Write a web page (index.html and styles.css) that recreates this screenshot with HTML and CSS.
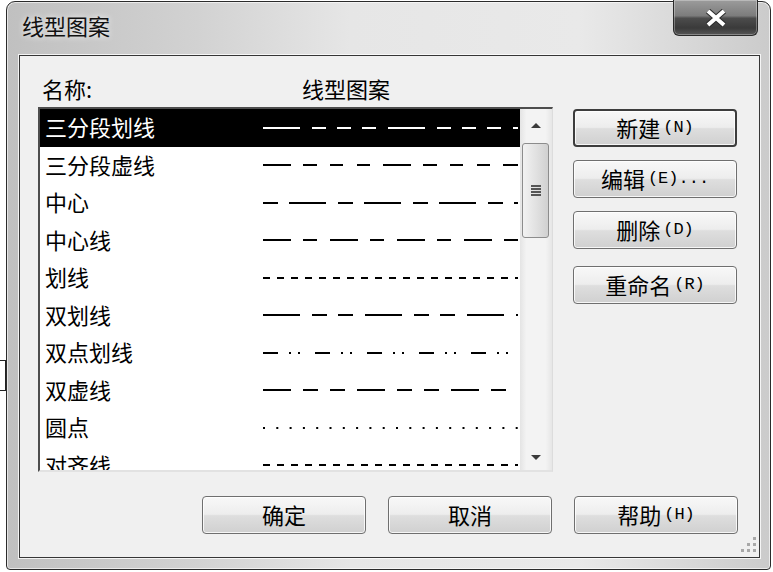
FILE: index.html
```html
<!DOCTYPE html>
<html>
<head>
    <meta charset="utf-8">
    <title>线型图案</title>
    <link rel="stylesheet" href="styles.css">
</head>
<body>
    <div class="behind"></div>
    <div class="window">
        <div class="titlebar">
            <span class="title">线型图案</span>
            <div class="close">
                <svg width="22" height="18" viewBox="0 0 22 18">
                    <path d="M3 2 L19 16 M19 2 L3 16" stroke="#2a2a2a" stroke-width="6"/>
                    <path d="M3 2 L19 16 M19 2 L3 16" stroke="#fff" stroke-width="4"/>
                </svg>
            </div>
        </div>
        <div class="client">
            <div class="main">
                <div class="left">
                    <div class="head"><span class="c1">名称:</span><span>线型图案</span></div>
                    <div class="listbox">
                        <ul class="list">
                            <li class="row sel"><span class="name">三分段划线</span><svg class="pat" width="255" height="4"><line x1="0" y1="2" x2="255" y2="2" stroke-dasharray="37 12 14 11 14 11 14 12"/></svg></li>
                            <li class="row"><span class="name">三分段虚线</span><svg class="pat" width="255" height="4"><line x1="0" y1="2" x2="255" y2="2" stroke-dasharray="28 12 14 13 13 14 13 13"/></svg></li>
                            <li class="row"><span class="name">中心</span><svg class="pat" width="255" height="4"><line x1="0" y1="2" x2="255" y2="2" stroke-dasharray="15 11 37 12"/></svg></li>
                            <li class="row"><span class="name">中心线</span><svg class="pat" width="255" height="4"><line x1="0" y1="2" x2="255" y2="2" stroke-dasharray="28 12 14 13"/></svg></li>
                            <li class="row"><span class="name">划线</span><svg class="pat" width="255" height="4"><line x1="0" y1="2" x2="255" y2="2" stroke-dasharray="7 7"/></svg></li>
                            <li class="row"><span class="name">双划线</span><svg class="pat" width="255" height="4"><line x1="0" y1="2" x2="255" y2="2" stroke-dasharray="37 12 15 11 15 12"/></svg></li>
                            <li class="row"><span class="name">双点划线</span><svg class="pat" width="255" height="4"><line x1="0" y1="2" x2="255" y2="2" stroke-dasharray="15 11 2 7 2 15"/></svg></li>
                            <li class="row"><span class="name">双虚线</span><svg class="pat" width="255" height="4"><line x1="0" y1="2" x2="255" y2="2" stroke-dasharray="28 12 15 12 15 12"/></svg></li>
                            <li class="row"><span class="name">圆点</span><svg class="pat" width="255" height="4"><line x1="0" y1="2" x2="255" y2="2" stroke-dasharray="2 11.3"/></svg></li>
                            <li class="row"><span class="name">对齐线</span><svg class="pat" width="255" height="4"><line x1="0" y1="2" x2="255" y2="2" stroke-dasharray="7 7"/></svg></li>
                        </ul>
                        <div class="scrollbar">
                            <div class="arrow up"></div>
                            <div class="thumb"><span class="grip"></span></div>
                            <div class="arrow down"></div>
                        </div>
                    </div>
                </div>
                <div class="side">
                    <button class="btn default">新建<span class="key">(N)</span></button>
                    <button class="btn">编辑<span class="key">(E)...</span></button>
                    <button class="btn">删除<span class="key">(D)</span></button>
                    <button class="btn">重命名<span class="key">(R)</span></button>
                </div>
            </div>
            <div class="foot">
                <button class="btn">确定</button>
                <button class="btn">取消</button>
                <button class="btn">帮助<span class="key">(H)</span></button>
            </div>
            <svg class="sizer" width="17" height="17" viewBox="0 0 17 17">
                <rect x="12" y="0" width="3" height="3"/>
                <rect x="6" y="6" width="3" height="3"/>
                <rect x="12" y="6" width="3" height="3"/>
                <rect x="0" y="12" width="3" height="3"/>
                <rect x="6" y="12" width="3" height="3"/>
                <rect x="12" y="12" width="3" height="3"/>
            </svg>
        </div>
    </div>
</body>
</html>
```

FILE: styles.css
```css
body {
    margin: 0;
    background: #fff;
    font-family: "Noto Sans CJK SC", "Liberation Sans", sans-serif;
    color: #000;
    position: relative;
}

/* bit of the window behind */
.behind {
    position: absolute;
    left: 0;
    top: 360px;
    width: 5px;
    height: 29px;
    border: 1px solid #222;
    border-left: none;
}

.window {
    margin: 1px 0 0 6px;
    width: 765px;
    height: 569px;
    box-sizing: border-box;
    border: 1px solid #2b2b2b;
    border-radius: 9px 9px 4px 4px;
    background: linear-gradient(to right, #c0c0c0, #d2d2d2 25%, #e6e6e6 45%, #e9e9e9 75%, #cbcbcb);
    box-shadow: inset 0 0 0 1px rgba(255, 255, 255, 0.6);
    padding: 0 10px 11px 12px;
    display: flex;
    flex-direction: column;
}

.titlebar {
    height: 53px;
    display: flex;
    justify-content: space-between;
    align-items: flex-start;
}

.title {
    font-size: 22px;
    line-height: 26px;
    margin-top: 10px;
    padding-left: 3px;
    color: #111;
    text-shadow: 0 0 6px #fff;
}

.close {
    width: 85px;
    height: 36px;
    margin: -2px 2px 0 0;
    box-sizing: border-box;
    border: 1px solid #2a2a2a;
    border-top: none;
    border-radius: 0 0 6px 6px;
    background: linear-gradient(#9c9c9c, #7c7c7c 45%, #4c4c4c 52%, #3a3a3a 80%, #575757);
    box-shadow: inset 0 0 0 1px rgba(255, 255, 255, 0.3);
    display: flex;
    align-items: center;
    justify-content: center;
}

.client {
    flex: 1;
    position: relative;
    background: #f0f0f0;
    border: 1px solid #363636;
    box-shadow: 0 0 0 1px rgba(255, 255, 255, 0.8);
    padding: 20px 21px 0 18px;
    display: flex;
    flex-direction: column;
}

.main {
    display: flex;
}

.left {
    width: 515px;
}

.head {
    display: flex;
    height: 31px;
    font-size: 22px;
    line-height: 24px;
}

.head .c1 {
    width: 264px;
    padding-left: 4px;
    box-sizing: border-box;
}

.listbox {
    display: flex;
    height: 365px;
    box-sizing: border-box;
    border-style: solid;
    border-width: 2px 1px 2px 2px;
    border-color: #4d4d4d #dcdcdc #e2e2e2 #4d4d4d;
    background: #fff;
}

.list {
    list-style: none;
    margin: 0;
    padding: 0;
    width: 480px;
    overflow: hidden;
}

.row {
    display: flex;
    align-items: center;
    height: 37.5px;
    font-size: 22px;
    line-height: 1;
}

.row .name {
    width: 223px;
    padding: 0 0 3px 5px;
    box-sizing: border-box;
}

.row.sel {
    background: #000;
    color: #fff;
}

.pat {
    display: block;
    flex: none;
}

.pat line {
    stroke: #000;
    stroke-width: 2;
}

.sel .pat line {
    stroke: #fff;
}

/* scrollbar */
.scrollbar {
    width: 32px;
    display: flex;
    flex-direction: column;
    background: linear-gradient(to right, #e4e4e4, #f3f3f3 20%, #f3f3f3 80%, #e6e6e6);
}

.arrow {
    display: flex;
    align-items: center;
    justify-content: center;
}

.arrow.up {
    height: 33px;
}

.arrow.down {
    height: 26px;
    margin-top: auto;
}

.arrow::after {
    content: "";
    border-left: 5px solid transparent;
    border-right: 5px solid transparent;
}

.up::after {
    border-bottom: 5px solid #3a3a3a;
}

.down::after {
    border-top: 5px solid #3a3a3a;
}

.thumb {
    height: 95px;
    margin: 1px 3px 0 2px;
    box-sizing: border-box;
    border: 1px solid #8c8c8c;
    border-radius: 3px;
    background: linear-gradient(to right, #f2f2f2, #e2e2e2 50%, #d0d0d0);
    display: flex;
    align-items: center;
    justify-content: center;
}

.grip {
    width: 10px;
    height: 11px;
    background: repeating-linear-gradient(to bottom, #555 0 2px, transparent 2px 3px);
}

/* buttons */
.side {
    margin-left: 20px;
    padding-top: 33px;
    display: flex;
    flex-direction: column;
    gap: 13px;
}

.side .btn:last-child {
    margin-top: 4px;
}

.btn {
    width: 164px;
    height: 38px;
    box-sizing: border-box;
    border: 1px solid #6f6f6f;
    border-radius: 4px;
    background: linear-gradient(#f8f8f8, #ededed 48%, #dedede 52%, #d0d0d0);
    box-shadow: inset 0 0 0 1px rgba(255, 255, 255, 0.8);
    font-family: inherit;
    font-size: 22px;
    line-height: 1;
    color: #000;
    padding: 0 0 2px;
    display: flex;
    align-items: center;
    justify-content: center;
}

.btn.default {
    border: 2px solid #3d3d3d;
}

.key {
    font-family: "Liberation Mono", monospace;
    font-size: 17px;
    margin-left: 3px;
}

.foot {
    display: flex;
    justify-content: flex-end;
    gap: 22px;
    margin-top: 24px;
}

.sizer {
    position: absolute;
    right: 1px;
    bottom: 3px;
    fill: #a8a8a8;
}
```
